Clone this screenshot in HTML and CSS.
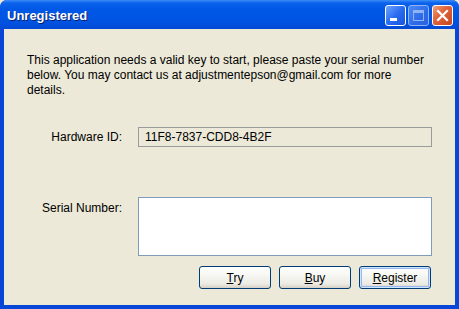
FILE: index.html
```html
<!DOCTYPE html>
<html>
<head>
    <title>Unregistered</title>
    <link rel="stylesheet" href="styles.css">
</head>
<body>
    <div class="window">
        <div class="title-bar">
            <span class="title-text">Unregistered</span>
            <div class="caption-buttons">
                <span class="cap-btn cap-min"><span class="min-glyph"></span></span>
                <span class="cap-btn cap-max"><span class="max-glyph"></span></span>
                <span class="cap-btn cap-close">
                    <svg width="13" height="13" viewBox="0 0 13 13">
                        <path d="M2 2 L11 11 M11 2 L2 11" stroke="#fff" stroke-width="2.2" stroke-linecap="square"/>
                    </svg>
                </span>
            </div>
        </div>
        <div class="client">
            <p class="intro">This application needs a valid key to start, please paste your serial number<br>below. You may contact us at adjustmentepson@gmail.com for more<br>details.</p>

            <div class="form-row hw-row">
                <label class="field-label">Hardware ID:</label>
                <div class="hw-box">11F8-7837-CDD8-4B2F</div>
            </div>

            <div class="form-row serial-row">
                <label class="field-label">Serial Number:</label>
                <textarea class="serial-box"></textarea>
            </div>

            <div class="button-row">
                <button class="xp-btn"><u>T</u>ry</button>
                <button class="xp-btn"><u>B</u>uy</button>
                <button class="xp-btn default-btn"><u>R</u>egister</button>
            </div>
        </div>
    </div>
</body>
</html>
```

FILE: styles.css
```css
body {
    margin: 0;
    background-color: #ece9d8;
    font-family: "Liberation Sans", Arial, sans-serif;
}

.window {
    width: 459px;
    height: 309px;
    display: flex;
    flex-direction: column;
    background-color: #0846d8;
    border-radius: 7px 7px 0 0;
    overflow: hidden;
}

/* Title bar */
.title-bar {
    height: 29px;
    flex: none;
    display: flex;
    align-items: center;
    justify-content: space-between;
    padding: 0 6px 0 7px;
    background: linear-gradient(#3d8ef8 0, #0a62ec 3px, #0058e6 9px, #0055e4 18px, #0150de 24px, #0449d2 29px);
}

.title-text {
    color: white;
    font-weight: bold;
    font-size: 13px;
    text-shadow: 1px 1px 0 #0a1e6e;
    margin-top: 1px;
}

.caption-buttons {
    display: flex;
    gap: 2px;
    margin-top: 2px;
}

.cap-btn {
    width: 19px;
    height: 19px;
    border: 1px solid white;
    border-radius: 3px;
    display: flex;
    align-items: center;
    justify-content: center;
    position: relative;
}

.cap-min {
    background: linear-gradient(135deg, #6ea6ff 0, #2a6cf0 50%, #1a55dc 100%);
}

.min-glyph {
    position: absolute;
    left: 4px;
    bottom: 4px;
    width: 7px;
    height: 3px;
    background-color: white;
}

.cap-max {
    border-color: #8fb4f4;
    background: linear-gradient(135deg, #4d8af5 0, #2d6ae8 60%, #2a62de 100%);
}

.max-glyph {
    width: 9px;
    height: 7px;
    border: 1px solid #8fb4f4;
    border-top-width: 3px;
}

.cap-btn.cap-close {
    margin-left: 1px;
    background: linear-gradient(135deg, #f0a080 0, #e0653c 40%, #c8461e 100%);
}

/* Client area */
.client {
    flex: 1;
    margin: 0 4px 4px 4px;
    background-color: #ece9d8;
    padding: 0 0 0 23px;
    font-size: 12px;
    color: #000;
}

.intro {
    margin: 24px 0 0 0;
    line-height: 15px;
    white-space: nowrap;
}

.form-row {
    display: flex;
    gap: 16px;
}

.field-label {
    width: 95px;
    text-align: right;
}

.hw-row {
    margin-top: 29px;
    align-items: center;
}

.hw-box {
    width: 286px;
    height: 18px;
    line-height: 18px;
    padding-left: 6px;
    border: 1px solid #9a9c9c;
    background-color: #ece9d8;
}

.serial-row {
    margin-top: 50px;
}

.serial-row .field-label {
    padding-top: 4px;
}

.serial-box {
    width: 292px;
    height: 57px;
    margin: 0;
    padding: 0;
    border: 1px solid #7f9db9;
    background-color: white;
    resize: none;
}

.button-row {
    display: flex;
    justify-content: flex-end;
    gap: 8px;
    margin: 10px 24px 0 0;
}

.xp-btn {
    width: 72px;
    height: 23px;
    padding: 0;
    border: 1px solid #003c74;
    border-radius: 3px;
    background: linear-gradient(#ffffff 0, #f6f6f2 40%, #ecebe4 80%, #d6d0c5 100%);
    font-family: "Liberation Sans", Arial, sans-serif;
    font-size: 12px;
    color: #000;
}

.default-btn {
    box-shadow: inset 0 0 0 1px #cee7ff, inset 0 0 0 2px #97b6f0;
}
```
